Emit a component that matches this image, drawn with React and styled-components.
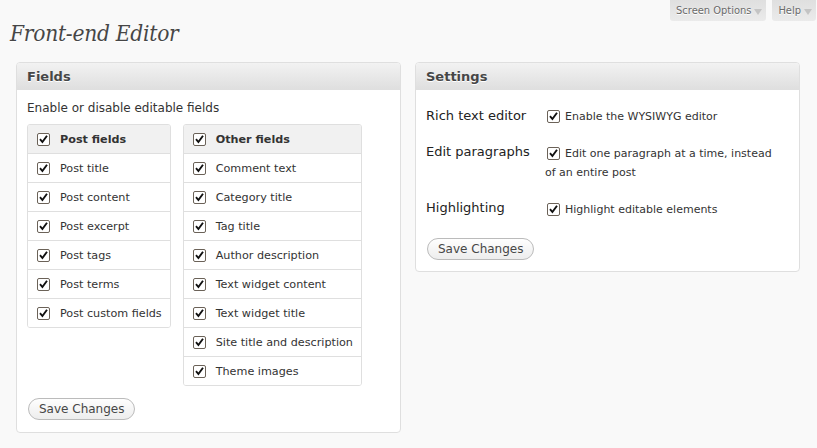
import React from "react";
import styled, { createGlobalStyle } from "styled-components";

const GlobalStyle = createGlobalStyle`
  body {
    margin: 0;
    background: #f9f9f9;
    font-family: "DejaVu Sans", sans-serif;
    color: #333;
  }
`;

const Page = styled.div`
  width: 817px;
  height: 448px;
  overflow: hidden;
`;

const ScreenMeta = styled.div`
  display: flex;
  justify-content: flex-end;
  gap: 6px;
  padding-right: 1px;
`;

const MetaTab = styled.div`
  display: flex;
  align-items: center;
  gap: 3px;
  height: 21px;
  padding: 0 4px 0 6px;
  background: linear-gradient(to bottom, #dfdfdf, #ebebeb);
  border-radius: 0 0 3px 3px;
  font-family: "DejaVu Sans Condensed", "DejaVu Sans", sans-serif;
  font-stretch: condensed;
  font-size: 11px;
  color: #6a6a6a;
  box-sizing: border-box;
  text-shadow: 0 1px 0 #fff;

  &::after {
    content: "";
    border-left: 4px solid transparent;
    border-right: 4px solid transparent;
    border-top: 6px solid #c4c4c4;
    margin-top: 2px;
  }
`;

const Title = styled.h2`
  margin: 0;
  padding: 0 0 0 10px;
  font-family: "DejaVu Serif Condensed", "DejaVu Serif", serif;
  font-stretch: condensed;
  font-style: italic;
  font-weight: normal;
  font-size: 22.5px;
  letter-spacing: -0.25px;
  line-height: 24px;
  color: #464646;
  text-shadow: 0 1px 0 #fff;
  height: 41px;
`;

const Columns = styled.div`
  display: flex;
  align-items: flex-start;
  gap: 14px;
  padding: 0 17px 0 16px;
`;

const Box = styled.div`
  flex: 1;
  background: #fff;
  border: 1px solid #dfdfdf;
  border-radius: 4px;
`;

const BoxHead = styled.h3`
  margin: 0;
  height: 26px;
  line-height: 27px;
  padding: 0 10px;
  font-size: 13px;
  font-weight: bold;
  color: #464646;
  background: linear-gradient(to bottom, #f2f2f2, #dfdfdf);
  border-bottom: 1px solid #dfdfdf;
  border-radius: 3px 3px 0 0;
  text-shadow: 0 1px 0 #fff;
`;

const BoxBody = styled.div`
  padding: ${({ pad }) => pad};
`;

const Intro = styled.p`
  margin: 0 0 8px;
  font-size: 12px;
  line-height: 16px;
  color: #333;
`;

const Tables = styled.div`
  display: flex;
  align-items: flex-start;
  gap: 12px;
`;

const FieldTable = styled.div`
  border: 1px solid #dfdfdf;
  border-radius: 3px;
  background: #fff;
  overflow: hidden;
`;

const FieldRow = styled.div`
  display: flex;
  align-items: center;
  gap: 10px;
  height: 28px;
  padding: 0 8px 0 9px;
  font-size: 11.2px;
  color: #333;
  font-weight: ${({ head }) => (head ? "bold" : "normal")};
  background: ${({ head }) => (head ? "#f1f1f1" : "#fff")};
  border-top: ${({ first }) => (first ? "none" : "1px solid #dfdfdf")};
  white-space: nowrap;
`;

const Check = styled.span`
  display: inline-flex;
  flex: none;
  width: 13px;
  height: 13px;
  box-sizing: border-box;
  border: 1px solid #6b6258;
  border-radius: 2px;
  background: #fff;
  align-items: center;
  justify-content: center;
  vertical-align: ${({ inline }) => (inline ? "-2px" : "middle")};
  margin: ${({ inline }) => (inline ? "0 5px 0 2px" : "0")};
`;

const SaveButton = styled.button`
  display: block;
  margin-top: ${({ top }) => top}px;
  margin-left: 1px;
  height: 22px;
  padding: 0 10px;
  font-family: "DejaVu Sans", sans-serif;
  font-size: 12px;
  color: #464646;
  border: 1px solid #bbb;
  border-radius: 11px;
  background: linear-gradient(to bottom, #fefefe, #ededed);
  cursor: pointer;
`;

const SettingsTable = styled.div`
  display: grid;
  grid-template-columns: 119px 1fr;
`;

const Label = styled.div`
  font-size: 13px;
  line-height: 16px;
  color: #222;
  padding-top: ${({ top }) => top}px;
`;

const Value = styled.div`
  font-size: 11px;
  line-height: 19px;
  color: #333;
  padding-top: ${({ top }) => top}px;
  padding-right: 10px;
`;

const CheckMark = () => (
  <svg width="11" height="11" viewBox="0 0 11 11">
    <path d="M2 5.2 L4.4 8 L9 1.8" fill="none" stroke="#111" strokeWidth="1.9" />
  </svg>
);

const Checkbox = ({ inline }) => (
  <Check inline={inline}>
    <CheckMark />
  </Check>
);

const postFields = [
  "Post title",
  "Post content",
  "Post excerpt",
  "Post tags",
  "Post terms",
  "Post custom fields",
];

const otherFields = [
  "Comment text",
  "Category title",
  "Tag title",
  "Author description",
  "Text widget content",
  "Text widget title",
  "Site title and description",
  "Theme images",
];

const Table = ({ title, items }) => (
  <FieldTable>
    <FieldRow head first>
      <Checkbox />
      {title}
    </FieldRow>
    {items.map((item) => (
      <FieldRow key={item}>
        <Checkbox />
        {item}
      </FieldRow>
    ))}
  </FieldTable>
);

const App = () => (
  <Page>
    <GlobalStyle />
    <ScreenMeta>
      <MetaTab>Screen Options</MetaTab>
      <MetaTab>Help</MetaTab>
    </ScreenMeta>
    <Title>Front-end Editor</Title>
    <Columns>
      <Box>
        <BoxHead>Fields</BoxHead>
        <BoxBody pad="10px 10px 12px 10px">
          <Intro>Enable or disable editable fields</Intro>
          <Tables>
            <Table title="Post fields" items={postFields} />
            <Table title="Other fields" items={otherFields} />
          </Tables>
          <SaveButton top={12}>Save Changes</SaveButton>
        </BoxBody>
      </Box>
      <Box>
        <BoxHead>Settings</BoxHead>
        <BoxBody pad="8px 10px 11px 10px">
          <SettingsTable>
            <Label top={10}>Rich text editor</Label>
            <Value top={9}>
              <Checkbox inline />
              Enable the WYSIWYG editor
            </Value>
            <Label top={18}>Edit paragraphs</Label>
            <Value top={18}>
              <Checkbox inline />
              Edit one paragraph at a time, instead of an entire post
            </Value>
            <Label top={18}>Highlighting</Label>
            <Value top={18}>
              <Checkbox inline />
              Highlight editable elements
            </Value>
          </SettingsTable>
          <SaveButton top={19}>Save Changes</SaveButton>
        </BoxBody>
      </Box>
    </Columns>
  </Page>
);

export default App;
